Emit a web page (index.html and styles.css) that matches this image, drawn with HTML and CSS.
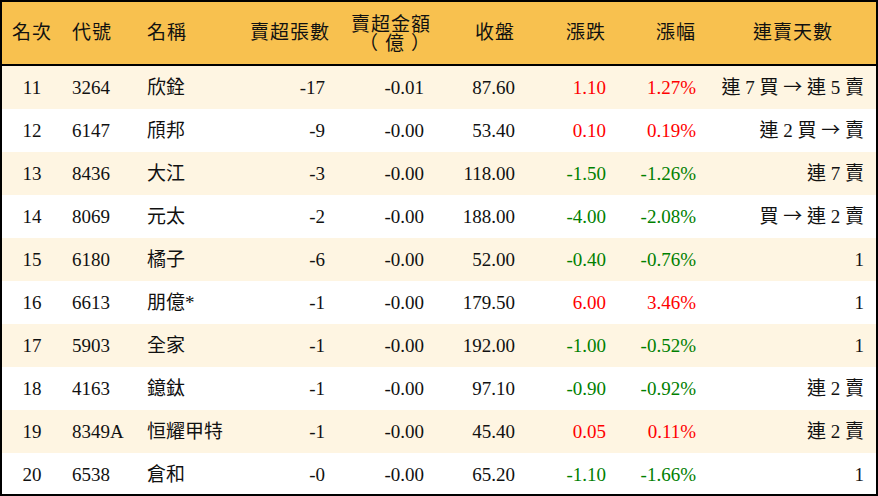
FILE: index.html
```html
<!DOCTYPE html>
<html lang="zh-Hant">
<head>
<meta charset="utf-8">
<title>賣超排行</title>
<link rel="stylesheet" href="styles.css">
</head>
<body>
<div class="frame">
<table class="rank">
  <colgroup>
    <col class="c1"><col class="c2"><col class="c3"><col class="c4"><col class="c5"><col class="c6"><col class="c7"><col class="c8"><col class="c9">
  </colgroup>
  <thead>
    <tr>
      <th class="ctr">名次</th>
      <th class="lft">代號</th>
      <th class="lft">名稱</th>
      <th class="rgt">賣超張數</th>
      <th class="rgt two"><span class="stack">賣超金額<br><span class="sub">（億）</span></span></th>
      <th class="rgt">收盤</th>
      <th class="rgt">漲跌</th>
      <th class="rgt">漲幅</th>
      <th class="ctr last">連賣天數</th>
    </tr>
  </thead>
  <tbody>
    <tr class="odd"><td class="ctr">11</td><td class="lft">3264</td><td class="lft">欣銓</td><td class="rgt">-17</td><td class="rgt">-0.01</td><td class="rgt">87.60</td><td class="rgt up">1.10</td><td class="rgt up">1.27%</td><td class="rgt last">連 7 買 <span class="arrow">→</span> 連 5 賣</td></tr>
    <tr><td class="ctr">12</td><td class="lft">6147</td><td class="lft">頎邦</td><td class="rgt">-9</td><td class="rgt">-0.00</td><td class="rgt">53.40</td><td class="rgt up">0.10</td><td class="rgt up">0.19%</td><td class="rgt last">連 2 買 <span class="arrow">→</span> 賣</td></tr>
    <tr class="odd"><td class="ctr">13</td><td class="lft">8436</td><td class="lft">大江</td><td class="rgt">-3</td><td class="rgt">-0.00</td><td class="rgt">118.00</td><td class="rgt dn">-1.50</td><td class="rgt dn">-1.26%</td><td class="rgt last">連 7 賣</td></tr>
    <tr><td class="ctr">14</td><td class="lft">8069</td><td class="lft">元太</td><td class="rgt">-2</td><td class="rgt">-0.00</td><td class="rgt">188.00</td><td class="rgt dn">-4.00</td><td class="rgt dn">-2.08%</td><td class="rgt last">買 <span class="arrow">→</span> 連 2 賣</td></tr>
    <tr class="odd"><td class="ctr">15</td><td class="lft">6180</td><td class="lft">橘子</td><td class="rgt">-6</td><td class="rgt">-0.00</td><td class="rgt">52.00</td><td class="rgt dn">-0.40</td><td class="rgt dn">-0.76%</td><td class="rgt last">1</td></tr>
    <tr><td class="ctr">16</td><td class="lft">6613</td><td class="lft">朋億*</td><td class="rgt">-1</td><td class="rgt">-0.00</td><td class="rgt">179.50</td><td class="rgt up">6.00</td><td class="rgt up">3.46%</td><td class="rgt last">1</td></tr>
    <tr class="odd"><td class="ctr">17</td><td class="lft">5903</td><td class="lft">全家</td><td class="rgt">-1</td><td class="rgt">-0.00</td><td class="rgt">192.00</td><td class="rgt dn">-1.00</td><td class="rgt dn">-0.52%</td><td class="rgt last">1</td></tr>
    <tr><td class="ctr">18</td><td class="lft">4163</td><td class="lft">鐿鈦</td><td class="rgt">-1</td><td class="rgt">-0.00</td><td class="rgt">97.10</td><td class="rgt dn">-0.90</td><td class="rgt dn">-0.92%</td><td class="rgt last">連 2 賣</td></tr>
    <tr class="odd"><td class="ctr">19</td><td class="lft">8349A</td><td class="lft">恒耀甲特</td><td class="rgt">-1</td><td class="rgt">-0.00</td><td class="rgt">45.40</td><td class="rgt up">0.05</td><td class="rgt up">0.11%</td><td class="rgt last">連 2 賣</td></tr>
    <tr><td class="ctr">20</td><td class="lft">6538</td><td class="lft">倉和</td><td class="rgt">-0</td><td class="rgt">-0.00</td><td class="rgt">65.20</td><td class="rgt dn">-1.10</td><td class="rgt dn">-1.66%</td><td class="rgt last">1</td></tr>
  </tbody>
</table>
</div>
</body>
</html>
```

FILE: styles.css
```css
html, body {
  margin: 0;
  padding: 0;
  background: #ffffff;
}

.frame {
  width: 878px;
  height: 496px;
  box-sizing: border-box;
  border: 2px solid #000;
  background: #ffffff;
  overflow: hidden;
}

.rank {
  width: 874px;
  border-collapse: collapse;
  table-layout: fixed;
  font-family: "Liberation Serif", "Noto Sans CJK TC", serif;
  font-size: 19px;
  line-height: 22px;
  color: #111;
}

.c1 { width: 60px; }
.c2 { width: 75px; }
.c3 { width: 103px; }
.c4 { width: 95px; }
.c5 { width: 99px; }
.c6 { width: 91px; }
.c7 { width: 91px; }
.c8 { width: 90px; }
.c9 { width: 170px; }

.rank th {
  height: 60px;
  padding: 0 10px;
  background: #f8c14f;
  font-weight: normal;
  border-bottom: 2px solid #000;
  white-space: nowrap;
  letter-spacing: 1px;
  vertical-align: middle;
}

.rank th.two {
  line-height: 19px;
  padding-top: 2px;
}

.stack {
  display: inline-block;
  text-align: center;
}

.sub {
  display: inline-block;
  letter-spacing: 7px;
  padding-left: 14px;
}

.rank td {
  height: 43px;
  padding: 0 10px;
  white-space: nowrap;
  vertical-align: middle;
}

.rank tbody tr.odd td {
  background: #fef5e2;
}

.ctr { text-align: center; }
.lft { text-align: left; }
.rgt { text-align: right; }

.rank td.last { padding-right: 12px; }
.rank th.last { padding-left: 14px; }

.arrow {
  font-family: "Noto Sans CJK TC", "DejaVu Sans", sans-serif;
  font-size: 19px;
  line-height: 1;
}

.up { color: #ff0000; }
.dn { color: #008000; }
```
